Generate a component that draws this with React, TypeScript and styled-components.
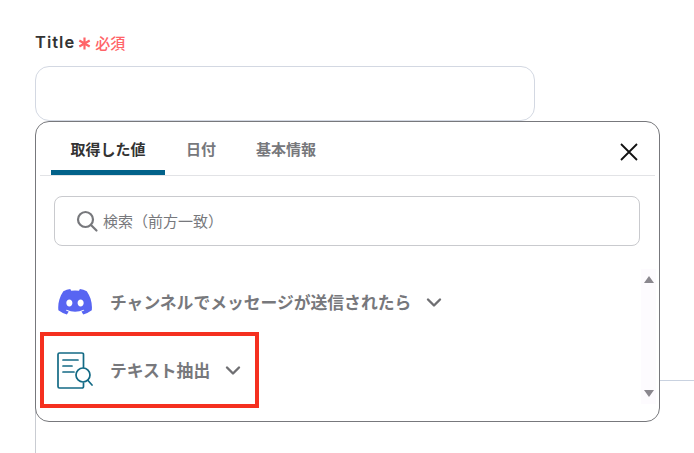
import * as React from 'react';
import styled, { createGlobalStyle } from 'styled-components';

const GlobalStyle = createGlobalStyle`
  html, body { margin: 0; padding: 0; background: #fff; }
  body {
    width: 694px;
    height: 453px;
    overflow: hidden;
    font-family: "Inter", "Noto Sans CJK JP", sans-serif;
  }
`;

const Page = styled.div`
  position: relative;
  width: 694px;
  height: 453px;
  overflow: hidden;
  padding: 31px 0 0 35px;
  box-sizing: border-box;
`;

const Label = styled.div`
  display: flex;
  align-items: center;
  height: 22px;
  gap: 3px;
`;

const LabelText = styled.span`
  font-size: 16.5px;
  font-weight: 600;
  letter-spacing: 1px;
  color: #333;
`;

const Required = styled.span`
  display: flex;
  align-items: center;
  gap: 4px;
  color: #ff6468;
  font-size: 15px;
  font-weight: 500;
  font-family: "Noto Sans CJK JP", sans-serif;
`;

const TitleInput = styled.div`
  margin-top: 13px;
  width: 500px;
  height: 55px;
  box-sizing: border-box;
  border: 1px solid #d3d8e2;
  border-radius: 14px;
  background: #fff;
`;

const NextField = styled.div`
  margin-top: 259px;
  height: 120px;
  border-top: 1px solid #c9d2e0;
  border-left: 1px solid #c9ccd2;
`;

const Popup = styled.div`
  position: absolute;
  left: 35px;
  top: 121px;
  width: 625px;
  height: 301px;
  box-sizing: border-box;
  border: 1px solid #77787c;
  border-radius: 14px;
  background: #fff;
  font-family: "Noto Sans CJK JP", sans-serif;
`;

const TabBar = styled.div`
  display: flex;
  align-items: stretch;
  height: 53px;
  margin: 0 4px;
  padding-left: 11px;
  border-bottom: 1px solid #e2e3e6;
`;

const Tab = styled.div<{ $active?: boolean }>`
  width: ${({ $active }) => ($active ? '114px' : 'auto')};
  margin-right: ${({ $active }) => ($active ? '21px' : '40px')};
  padding-top: 17px;
  box-sizing: border-box;
  text-align: center;
  font-size: 15px;
  line-height: 20px;
  font-weight: 700;
  color: ${({ $active }) => ($active ? '#333' : '#77787c')};
  border-bottom: 5px solid ${({ $active }) => ($active ? '#02628a' : 'transparent')};
  border-radius: 4px 4px 0 0;
`;

const CloseButton = styled.div`
  position: absolute;
  right: 20px;
  top: 20px;
  width: 20px;
  height: 20px;
  display: flex;
`;

const SearchBox = styled.div`
  display: flex;
  align-items: center;
  gap: 4px;
  margin: 20px 19px 0 18px;
  height: 50px;
  box-sizing: border-box;
  padding-left: 20px;
  padding-bottom: 1px;
  border: 1px solid #c9cace;
  border-radius: 8px;
  font-size: 15px;
  color: #77787c;
`;

const Body = styled.div`
  position: relative;
  padding: 22px 0 0 21px;
`;

const Row = styled.div`
  display: flex;
  align-items: center;
  height: 68px;
`;

const RowIcon = styled.div`
  width: 35px;
  height: 37px;
  margin-right: 18px;
  display: flex;
  align-items: center;
  justify-content: center;
`;

const RowText = styled.span`
  font-size: 16.8px;
  font-weight: 700;
  color: #77787c;
  margin-right: 15px;
`;

const Scrollbar = styled.div`
  position: absolute;
  right: 3px;
  top: 23px;
  width: 15px;
  height: 135px;
  background: #fdfbfe;
  display: flex;
  flex-direction: column;
  justify-content: space-between;
  align-items: center;
  padding: 7px 0;
  box-sizing: border-box;
`;

const Arrow = styled.div<{ $down?: boolean }>`
  width: 0;
  height: 0;
  border-left: 5px solid transparent;
  border-right: 5px solid transparent;
  ${({ $down }) => ($down ? 'border-top: 7px solid #8a878e;' : 'border-bottom: 7px solid #8a878e;')}
`;

const Highlight = styled.div`
  position: absolute;
  left: 40px;
  top: 332px;
  width: 219px;
  height: 76px;
  box-sizing: border-box;
  border: 4px solid #f5301f;
`;

const Chevron = () => (
  <svg width="16" height="16" viewBox="0 0 16 16" fill="none" stroke="#6f6f72" strokeWidth="2.4" strokeLinecap="round" strokeLinejoin="round">
    <path d="M2 5.500 8 11.500l6-6" />
  </svg>
);

const DiscordIcon = () => (
  <svg width="34" height="26" viewBox="0 0 24 18.3" fill="#5865f2">
    <path d="M20.32 1.52A19.8 19.8 0 0 0 15.43 0a13.800 13.800 0 0 0-.63 1.280 18.300 18.300 0 0 0-5.490 0A13.500 13.500 0 0 0 8.670 0a19.700 19.700 0 0 0-4.890 1.520C.68 6.100-.16 10.580.26 15a19.900 19.900 0 0 0 6 3.030c.49-.66.92-1.350 1.290-2.090a12.900 12.900 0 0 1-2.040-.97c.17-.12.34-.25.5-.38a14.200 14.200 0 0 0 12.100 0c.16.130.330.260.5.380-.65.380-1.330.710-2.040.970.370.740.800 1.430 1.290 2.090a19.800 19.800 0 0 0 6-3.030c.49-5.130-.84-9.560-3.540-13.480ZM8.020 12.280c-1.180 0-2.150-1.080-2.150-2.400s.950-2.410 2.150-2.410 2.170 1.090 2.150 2.410c0 1.320-.950 2.400-2.150 2.400Zm7.960 0c-1.180 0-2.150-1.080-2.150-2.400s.950-2.410 2.150-2.410 2.170 1.090 2.150 2.410c0 1.320-.940 2.400-2.150 2.400Z" />
  </svg>
);

const DocSearchIcon = () => (
  <svg width="36" height="37" viewBox="0 0 36 37" fill="none" stroke="#136a85" strokeWidth="1.700" strokeLinecap="round" style={{ flexShrink: 0 }}>
    <path d="M26.500 15.500V2.500a1.500 1.500 0 0 0-1.500-1.500H2.500A1.500 1.500 0 0 0 1 2.500v32A1.500 1.500 0 0 0 2.500 36H25a1.500 1.500 0 0 0 1.500-1.500V31" />
    <path d="M6 8h15M6 14h9M6 20h11" />
    <circle cx="26" cy="23" r="7" />
    <path d="M31 28.500l4 4.500" />
  </svg>
);

export default function App() {
  return (
    <Page>
      <GlobalStyle />
      <Label>
        <LabelText>Title</LabelText>
        <Required>
          <svg width="13" height="13" viewBox="0 0 12 12" fill="none" stroke="#ff6468" strokeWidth="2" style={{ marginTop: 3 }}>
            <path d="M6 0.500v11M1.200 3.200l9.600 5.600M10.800 3.200l-9.600 5.600" />
          </svg>
          必須
        </Required>
      </Label>
      <TitleInput />
      <NextField />
      <Popup>
        <TabBar>
          <Tab $active>取得した値</Tab>
          <Tab>日付</Tab>
          <Tab>基本情報</Tab>
        </TabBar>
        <CloseButton>
          <svg width="20" height="20" viewBox="0 0 20 20" fill="none" stroke="#111" strokeWidth="1.800">
            <path d="M2 2l16 16M18 2 2 18" />
          </svg>
        </CloseButton>
        <SearchBox>
          <svg width="24" height="24" viewBox="0 0 24 24" fill="none" stroke="#77787c" strokeWidth="2.200" strokeLinecap="round">
            <circle cx="10.500" cy="10.500" r="7.500" />
            <path d="m16 16 5.500 5.500" />
          </svg>
          検索（前方一致）
        </SearchBox>
        <Body>
          <Row>
            <RowIcon><DiscordIcon /></RowIcon>
            <RowText>チャンネルでメッセージが送信されたら</RowText>
            <Chevron />
          </Row>
          <Row>
            <RowIcon><DocSearchIcon /></RowIcon>
            <RowText>テキスト抽出</RowText>
            <Chevron />
          </Row>
          <Scrollbar>
            <Arrow />
            <Arrow $down />
          </Scrollbar>
        </Body>
      </Popup>
      <Highlight />
    </Page>
  );
}
